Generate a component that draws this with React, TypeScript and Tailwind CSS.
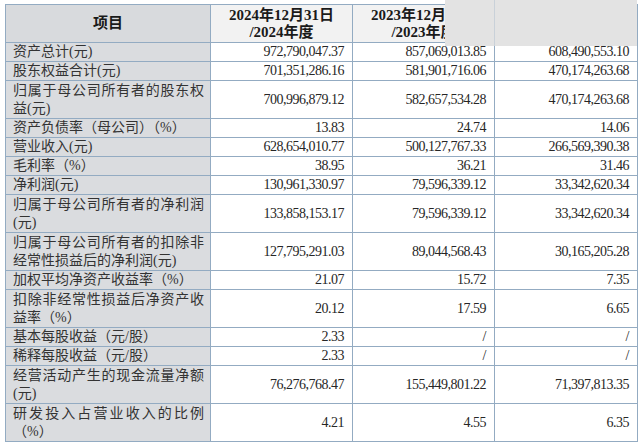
import React from "react";

type Row = {
  label: string;
  v2024: string;
  v2023: string;
  v2022: string;
  tall?: boolean;
};

const ROWS: Row[] = [
  { label: "资产总计(元)", v2024: "972,790,047.37", v2023: "857,069,013.85", v2022: "608,490,553.10" },
  { label: "股东权益合计(元)", v2024: "701,351,286.16", v2023: "581,901,716.06", v2022: "470,174,263.68" },
  { label: "归属于母公司所有者的股东权益(元)", v2024: "700,996,879.12", v2023: "582,657,534.28", v2022: "470,174,263.68", tall: true },
  { label: "资产负债率（母公司）（%）", v2024: "13.83", v2023: "24.74", v2022: "14.06" },
  { label: "营业收入(元)", v2024: "628,654,010.77", v2023: "500,127,767.33", v2022: "266,569,390.38" },
  { label: "毛利率（%）", v2024: "38.95", v2023: "36.21", v2022: "31.46" },
  { label: "净利润(元)", v2024: "130,961,330.97", v2023: "79,596,339.12", v2022: "33,342,620.34" },
  { label: "归属于母公司所有者的净利润(元)", v2024: "133,858,153.17", v2023: "79,596,339.12", v2022: "33,342,620.34", tall: true },
  { label: "归属于母公司所有者的扣除非经常性损益后的净利润(元)", v2024: "127,795,291.03", v2023: "89,044,568.43", v2022: "30,165,205.28", tall: true },
  { label: "加权平均净资产收益率（%）", v2024: "21.07", v2023: "15.72", v2022: "7.35" },
  { label: "扣除非经常性损益后净资产收益率（%）", v2024: "20.12", v2023: "17.59", v2022: "6.65", tall: true },
  { label: "基本每股收益（元/股）", v2024: "2.33", v2023: "/", v2022: "/" },
  { label: "稀释每股收益（元/股）", v2024: "2.33", v2023: "/", v2022: "/" },
  { label: "经营活动产生的现金流量净额(元)", v2024: "76,276,768.47", v2023: "155,449,801.22", v2022: "71,397,813.35", tall: true },
  { label: "研发投入占营业收入的比例（%）", v2024: "4.21", v2023: "4.55", v2022: "6.35", tall: true },
];

const FONT = "font-['Liberation_Serif','Noto_Sans_CJK_SC',serif]";

export default function App() {
  return (
    <div className={`relative w-[640px] h-[447px] bg-white overflow-hidden ${FONT}`}>
      <table className="ml-[5px] mt-[4px] w-[632px] table-fixed border-collapse border border-[#93abc2] text-[#262626]">
        <colgroup>
          <col className="w-[205px]" />
          <col className="w-[142px]" />
          <col className="w-[142px]" />
          <col className="w-[143px]" />
        </colgroup>
        <thead>
          <tr className="h-[38px]">
            <th className="border border-[#93abc2] bg-[#d8dadd] p-0 text-center text-[15px] font-bold text-[#1a1a1a]">
              项目
            </th>
            <th className="border border-[#93abc2] bg-[#f2f2f2] p-0 text-center text-[15px] font-bold leading-[17px] text-[#1a1a1a]">
              2024年12月31日
              <br />
              /2024年度
            </th>
            <th className="border border-[#93abc2] bg-[#f2f2f2] p-0 text-center text-[15px] font-bold leading-[17px] text-[#1a1a1a]">
              2023年12月31日
              <br />
              /2023年度
            </th>
            <th className="border border-[#93abc2] bg-[#f2f2f2] p-0" />
          </tr>
        </thead>
        <tbody>
          {ROWS.map((r) => (
            <tr key={r.label} className={r.tall ? "h-[38px]" : "h-[19px]"}>
              <td className="border border-[#93abc2] bg-[#dadcdf] py-0 pl-[7px] pr-[6px] text-justify text-[14px] leading-[18px] text-[#333]">
                {r.label}
              </td>
              <td className="border border-[#93abc2] py-0 pr-[8px] text-right text-[14px] leading-[18px] tracking-[-0.5px]">
                {r.v2024}
              </td>
              <td className="border border-[#93abc2] py-0 pr-[8px] text-right text-[14px] leading-[18px] tracking-[-0.5px]">
                {r.v2023}
              </td>
              <td className="border border-[#93abc2] py-0 pr-[8px] text-right text-[14px] leading-[18px] tracking-[-0.5px]">
                {r.v2022}
              </td>
            </tr>
          ))}
        </tbody>
      </table>

      {/* blurred redaction patch over the last header cell */}
      <div className="absolute left-[445px] top-0 h-[46px] w-[192px] bg-[#e3e3e3]">
        <div className="absolute left-[49px] top-0 h-full w-px bg-[#c9d1d9]" />
      </div>
    </div>
  );
}
